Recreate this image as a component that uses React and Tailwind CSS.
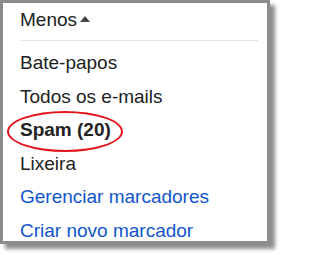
import React from "react";

const items = [
  { name: "Bate-papos" },
  { name: "Todos os e-mails" },
  { name: "Spam (20)", bold: true, circled: true },
  { name: "Lixeira" },
  { name: "Gerenciar marcadores", link: true },
  { name: "Criar novo marcador", link: true },
];

export default function App() {
  return (
    <div className="w-[281px] h-[255px] bg-white" style={{ fontFamily: '"Liberation Sans", Arial, sans-serif' }}>
      <div className="w-[270px] h-[244px] border-[3px] border-[#8c8c8c] bg-white shadow-[5px_5px_4px_rgba(0,0,0,0.45)] pl-[17px] pr-[9px] pt-[3px]">
        {/* header */}
        <div className="flex items-center h-[24px] mt-[2px] text-[19px] text-[#222]">
          <span>Menos</span>
          <svg width="10" height="6" viewBox="0 0 10 6" className="ml-[3px] mb-[2px]">
            <path d="M0 6 L5 0 L10 6 Z" fill="#444" />
          </svg>
        </div>
        <div className="h-px bg-[#e5e5e5] mt-[8px] mb-[5px]" />

        {/* labels */}
        <ul>
          {items.map((item) => (
            <li
              key={item.name}
              className={
                "relative leading-[33.6px] text-[19px] " +
                (item.link ? "text-[#1155cc]" : "text-[#222]") +
                (item.bold ? " font-bold" : "")
              }
            >
              {item.name}
              {item.circled && (
                <span className="absolute left-[-13px] top-[-2px] w-[116px] h-[41px] border-2 border-[#e3161d] rounded-[50%]" />
              )}
            </li>
          ))}
        </ul>
      </div>
    </div>
  );
}
